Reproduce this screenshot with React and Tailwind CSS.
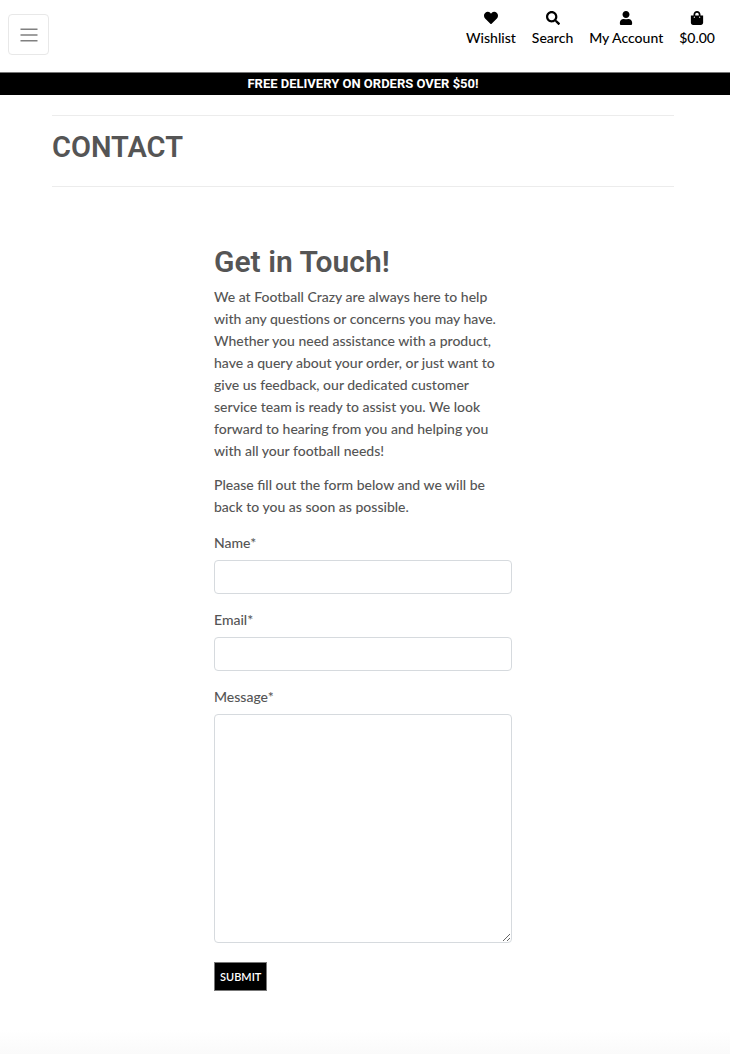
import { FaHeart, FaSearch, FaUser, FaShoppingBag } from "react-icons/fa";

const links = [
  { label: "Wishlist", Icon: FaHeart },
  { label: "Search", Icon: FaSearch },
  { label: "My Account", Icon: FaUser },
  { label: "$0.00", Icon: FaShoppingBag },
];

const fieldClass =
  "block w-full rounded-[4px] border border-[#d6dade] bg-white px-3 text-sm outline-none focus:border-gray-500";

function Field({ id, label, children }) {
  return (
    <div className="mb-[15px]">
      <label htmlFor={id} className="mb-[6px] block">
        {label}*
      </label>
      {children}
    </div>
  );
}

function Header() {
  return (
    <header className="flex h-[72px] items-start justify-between pl-2 pr-[15px]">
      <button
        type="button"
        aria-label="Toggle navigation"
        className="mt-[14px] flex size-[41px] items-center justify-center rounded-[4px] border border-[#e8e8e8]"
      >
        <svg viewBox="0 0 18 16" className="h-4 w-[18px]" fill="none" stroke="#808080" strokeWidth="1.5">
          <path d="M0.5 2.2H17.5M0.5 8H17.5M0.5 13.8H17.5" />
        </svg>
      </button>
      <nav className="flex gap-4 pt-[11px] text-black">
        {links.map(({ label, Icon }) => (
          <a key={label} href="#" className="flex flex-col items-center">
            <Icon className="size-[14px]" />
            <span className="mt-[2px] leading-[22px]">{label}</span>
          </a>
        ))}
      </nav>
    </header>
  );
}

export default function App() {
  return (
    <div className="flex min-h-screen flex-col bg-white font-[Lato,sans-serif] text-sm font-medium leading-[22px] text-[#555]">
      <Header />
      <div className="border-t border-[#777] bg-black pr-1 text-center font-[Roboto,sans-serif] text-[13px] font-bold leading-[22px] text-white">
        FREE DELIVERY ON ORDERS OVER $50!
      </div>
      <main className="mx-auto w-full max-w-[626px] pr-1">
        <div className="mt-5 border-y border-[#ececec] pt-[14px] pb-[21px]">
          <h1 className="font-[Roboto,sans-serif] text-[29px] font-semibold leading-[35px]">CONTACT</h1>
        </div>
        <section className="mx-auto mt-[57px] w-full max-w-[298px]">
          <h2 className="font-[Roboto,sans-serif] text-[30px] font-semibold leading-[35px]">Get in Touch!</h2>
          <p className="mt-[7px] mb-3 pr-2">
            We at Football Crazy are always here to help with any questions or concerns you may have. Whether you need
            assistance with a product, have a query about your order, or just want to give us feedback, our dedicated
            customer service team is ready to assist you. We look forward to hearing from you and helping you with all
            your football needs!
          </p>
          <p className="mb-[14px] pr-2">
            Please fill out the form below and we will be back to you as soon as possible.
          </p>
          <form>
            <Field id="name" label="Name">
              <input id="name" type="text" className={`${fieldClass} h-[34px]`} />
            </Field>
            <Field id="email" label="Email">
              <input id="email" type="email" className={`${fieldClass} h-[34px]`} />
            </Field>
            <Field id="message" label="Message">
              <textarea id="message" className={`${fieldClass} h-[229px] resize py-2`} />
            </Field>
            <button
              type="submit"
              className="mt-1 h-[29px] border border-[#777] bg-black px-[5px] text-[11px] font-semibold text-white"
            >
              SUBMIT
            </button>
          </form>
        </section>
      </main>
      <footer className="mt-auto h-6 bg-linear-to-b from-white to-[#fafafa]" />
    </div>
  );
}
